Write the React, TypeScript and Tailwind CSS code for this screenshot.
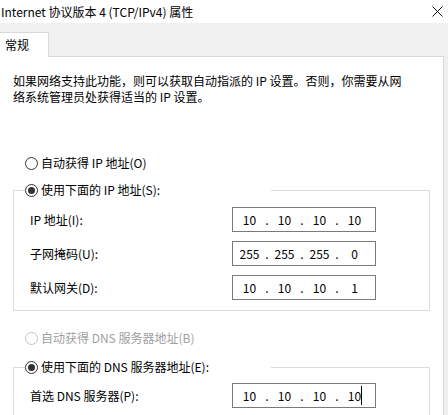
import React from "react";

const Radio = ({ checked, disabled }: { checked?: boolean; disabled?: boolean }) => (
  <span
    className={`w-[13px] h-[13px] rounded-full border flex items-center justify-center bg-white shrink-0 ${
      disabled ? "border-[#c4c4c4]" : "border-[#333333]"
    }`}
  >
    {checked && <span className="w-[7px] h-[7px] rounded-full bg-[#333333]" />}
  </span>
);

const RadioRow = ({ label, checked, disabled }: { label: string; checked?: boolean; disabled?: boolean }) => (
  <div className={`flex items-center gap-[3px] h-[16px] ${disabled ? "text-[#a0a0a0]" : "text-black"}`}>
    <Radio checked={checked} disabled={disabled} />
    <span className="whitespace-nowrap">{label}</span>
  </div>
);

const IpBox = ({ parts, caret }: { parts: string[]; caret?: boolean }) => (
  <div className="w-[144px] h-[25px] border border-[#7a7a7a] bg-white flex items-center pl-[2px]">
    {parts.map((p, i) => (
      <React.Fragment key={i}>
        <span className="w-[29px] text-center relative">
          {p}
          {caret && i === parts.length - 1 && (
            <span className="absolute right-[7px] top-[-2px] w-px h-[19px] bg-black" />
          )}
        </span>
        {i < parts.length - 1 && <span className="w-[6px] text-center">.</span>}
      </React.Fragment>
    ))}
  </div>
);

const Row = ({ label, parts, caret }: { label: string; parts: string[]; caret?: boolean }) => (
  <div className="flex items-center">
    <span className="w-[202px] whitespace-nowrap">{label}</span>
    <IpBox parts={parts} caret={caret} />
  </div>
);

export default function App() {
  return (
    <div className="w-[448px] h-[415px] overflow-hidden bg-[#f0f0f0] text-[12px] leading-[16px] text-black font-['Noto_Sans_CJK_SC',sans-serif]">
      {/* title bar */}
      <div className="h-[23px] bg-white flex items-center justify-between">
        <span className="pl-px whitespace-nowrap">Internet 协议版本 4 (TCP/IPv4) 属性</span>
        <svg width="11" height="11" viewBox="0 0 11 11" className="mr-[5px]">
          <path d="M0.5 0.5 L10.5 10.5 M10.5 0.5 L0.5 10.5" stroke="#111" strokeWidth="1" />
        </svg>
      </div>

      {/* tabs */}
      <div className="pt-[9px]">
        <div className="relative z-10 -mb-px w-[49px] h-[25px] bg-white border-t border-r border-[#d9d9d9] flex items-center pl-[5px]">
          常规
        </div>
        <div className="w-[444px] h-[400px] bg-white border-t border-r border-[#d9d9d9] pl-[13px]">
          <p className="mt-[16px]">
            如果网络支持此功能，则可以获取自动指派的 IP 设置。否则，你需要从网
            <br />
            络系统管理员处获得适当的 IP 设置。
          </p>

          <div className="mt-[50px] pl-[12px]">
            <RadioRow label="自动获得 IP 地址(O)" />
          </div>

          <fieldset className="mt-[11px] w-[417px] border border-[#dcdcdc] p-0">
            <legend className="ml-[11px] w-[246px] p-0">
              <RadioRow label="使用下面的 IP 地址(S):" checked />
            </legend>
            <div className="pl-[16px] pt-[9px] pb-[10px] flex flex-col gap-[9px]">
              <Row label="IP 地址(I):" parts={["10", "10", "10", "10"]} />
              <Row label="子网掩码(U):" parts={["255", "255", "255", "0"]} />
              <Row label="默认网关(D):" parts={["10", "10", "10", "1"]} />
            </div>
          </fieldset>

          <div className="mt-[19px] pl-[12px]">
            <RadioRow label="自动获得 DNS 服务器地址(B)" disabled />
          </div>

          <fieldset className="mt-[13px] w-[417px] border border-[#dcdcdc] p-0">
            <legend className="ml-[11px] w-[246px] p-0">
              <RadioRow label="使用下面的 DNS 服务器地址(E):" checked />
            </legend>
            <div className="pl-[16px] pt-[8px] pb-[40px] flex flex-col gap-[9px]">
              <Row label="首选 DNS 服务器(P):" parts={["10", "10", "10", "10"]} caret />
            </div>
          </fieldset>
        </div>
      </div>
    </div>
  );
}
